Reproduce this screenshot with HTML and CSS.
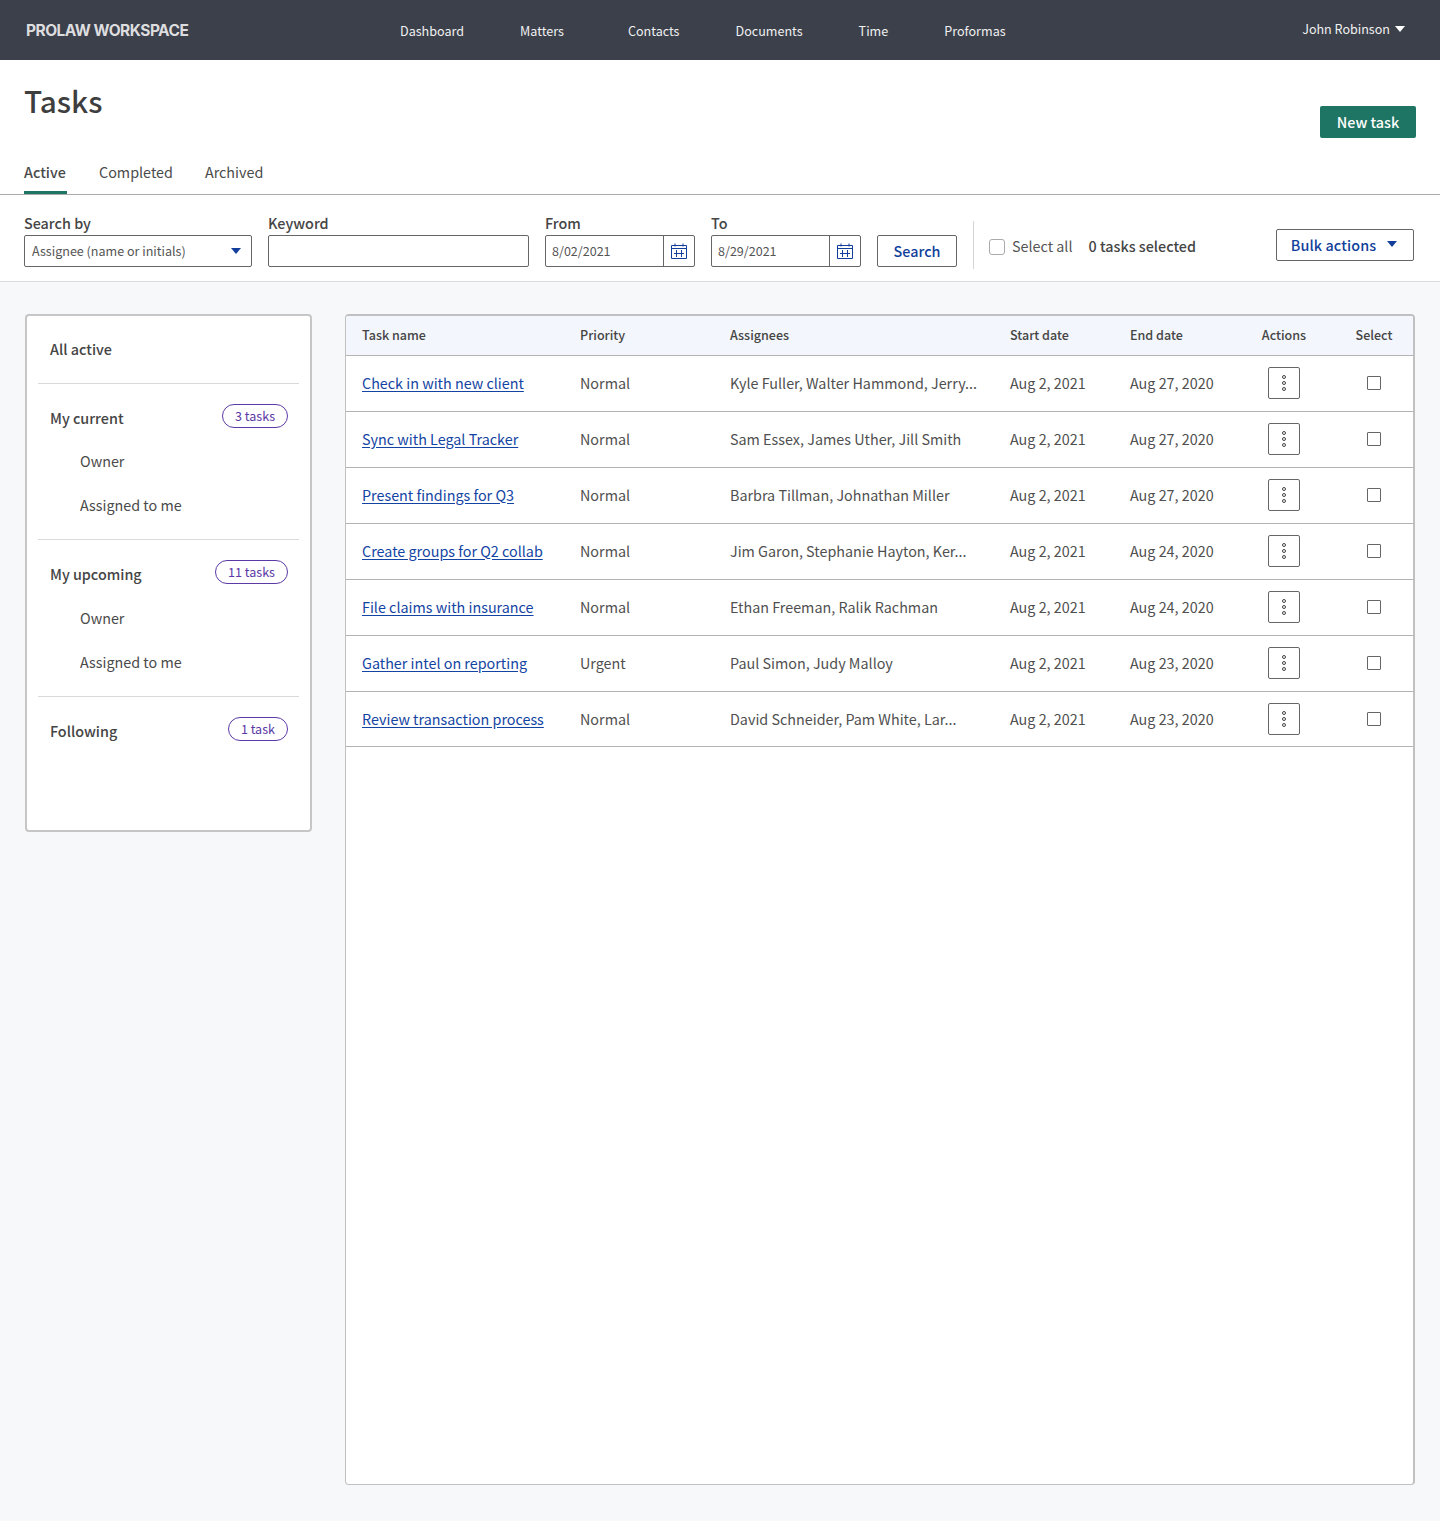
FILE: index.html
```html
<!DOCTYPE html>
<html lang="en">
<head>
<meta charset="utf-8">
<title>Tasks</title>
<link rel="stylesheet" href="styles.css">
</head>
<body>
<header class="topbar">
  <div class="logo">PROLAW WORKSPACE</div>
  <nav class="mainnav">
    <a>Dashboard</a><a class="wide">Matters</a><a>Contacts</a><a>Documents</a><a>Time</a><a>Proformas</a>
  </nav>
  <div class="user">John Robinson <span class="caret caret-white"></span></div>
</header>

<section class="titlebar">
  <div class="titlerow">
    <h1>Tasks</h1>
    <button class="btn-new">New task</button>
  </div>
  <div class="tabs">
    <a class="tab active">Active</a><a class="tab">Completed</a><a class="tab">Archived</a>
  </div>
</section>

<section class="filters">
  <div class="field f-search">
    <label>Search by</label>
    <div class="box select"><span>Assignee (name or initials)</span><span class="caret caret-blue"></span></div>
  </div>
  <div class="field f-keyword">
    <label>Keyword</label>
    <div class="box"></div>
  </div>
  <div class="field f-date">
    <label>From</label>
    <div class="box date"><span class="dateval">8/02/2021</span><span class="calbtn"><svg width="16" height="16" viewBox="0 0 16 16" fill="none" stroke="#123f9b" stroke-width="1"><path d="M.5 2.5h15v13H.5zM.5 5.5h15M4 .5v3M12 .5v3M5.5 7v7M10.5 7v7M3 10.5h10"/></svg></span></div>
  </div>
  <div class="field f-date">
    <label>To</label>
    <div class="box date"><span class="dateval">8/29/2021</span><span class="calbtn"><svg width="16" height="16" viewBox="0 0 16 16" fill="none" stroke="#123f9b" stroke-width="1"><path d="M.5 2.5h15v13H.5zM.5 5.5h15M4 .5v3M12 .5v3M5.5 7v7M10.5 7v7M3 10.5h10"/></svg></span></div>
  </div>
  <button class="btn-search">Search</button>
  <div class="vrule"></div>
  <label class="selectall"><input type="checkbox" class="check check-soft"><span>Select all</span></label>
  <div class="selected">0 tasks selected</div>
  <button class="btn-bulk">Bulk actions <span class="caret caret-blue"></span></button>
</section>

<main class="content">
  <aside class="side">
    <div class="sec sec-all"><div class="sec-title">All active</div></div>
    <div class="sec sec-current">
      <div class="sec-head"><div class="sec-title">My current</div><span class="pill">3 tasks</span></div>
      <div class="sub">Owner</div>
      <div class="sub">Assigned to me</div>
    </div>
    <div class="sec sec-upcoming">
      <div class="sec-head"><div class="sec-title">My upcoming</div><span class="pill">11 tasks</span></div>
      <div class="sub">Owner</div>
      <div class="sub">Assigned to me</div>
    </div>
    <div class="sec sec-last">
      <div class="sec-head"><div class="sec-title">Following</div><span class="pill">1 task</span></div>
    </div>
  </aside>

  <div class="panel">
    <table class="tasks">
      <colgroup><col class="c1"><col class="c2"><col class="c3"><col class="c4"><col class="c5"><col class="c6"><col class="c7"></colgroup>
      <thead>
        <tr><th>Task name</th><th>Priority</th><th>Assignees</th><th>Start date</th><th>End date</th><th class="ctr">Actions</th><th class="ctr">Select</th></tr>
      </thead>
      <tbody>
        <tr><td><a href="#">Check in with new client</a></td><td>Normal</td><td>Kyle Fuller, Walter Hammond, Jerry...</td><td>Aug 2, 2021</td><td>Aug 27, 2020</td><td class="ctr"><button class="kebab"><i></i><i></i><i></i></button></td><td class="ctr"><input type="checkbox" class="check"></td></tr>
        <tr><td><a href="#">Sync with Legal Tracker</a></td><td>Normal</td><td>Sam Essex, James Uther, Jill Smith</td><td>Aug 2, 2021</td><td>Aug 27, 2020</td><td class="ctr"><button class="kebab"><i></i><i></i><i></i></button></td><td class="ctr"><input type="checkbox" class="check"></td></tr>
        <tr><td><a href="#">Present findings for Q3</a></td><td>Normal</td><td>Barbra Tillman, Johnathan Miller</td><td>Aug 2, 2021</td><td>Aug 27, 2020</td><td class="ctr"><button class="kebab"><i></i><i></i><i></i></button></td><td class="ctr"><input type="checkbox" class="check"></td></tr>
        <tr><td><a href="#">Create groups for Q2 collab</a></td><td>Normal</td><td>Jim Garon, Stephanie Hayton, Ker...</td><td>Aug 2, 2021</td><td>Aug 24, 2020</td><td class="ctr"><button class="kebab"><i></i><i></i><i></i></button></td><td class="ctr"><input type="checkbox" class="check"></td></tr>
        <tr><td><a href="#">File claims with insurance</a></td><td>Normal</td><td>Ethan Freeman, Ralik Rachman</td><td>Aug 2, 2021</td><td>Aug 24, 2020</td><td class="ctr"><button class="kebab"><i></i><i></i><i></i></button></td><td class="ctr"><input type="checkbox" class="check"></td></tr>
        <tr><td><a href="#">Gather intel on reporting</a></td><td>Urgent</td><td>Paul Simon, Judy Malloy</td><td>Aug 2, 2021</td><td>Aug 23, 2020</td><td class="ctr"><button class="kebab"><i></i><i></i><i></i></button></td><td class="ctr"><input type="checkbox" class="check"></td></tr>
        <tr><td><a href="#">Review transaction process</a></td><td>Normal</td><td>David Schneider, Pam White, Lar...</td><td>Aug 2, 2021</td><td>Aug 23, 2020</td><td class="ctr"><button class="kebab"><i></i><i></i><i></i></button></td><td class="ctr"><input type="checkbox" class="check"></td></tr>
      </tbody>
    </table>
  </div>
</main>
</body>
</html>
```
FILE: styles.css
```css
* { box-sizing: border-box; }
html, body { margin: 0; padding: 0; }
body {
  font-family: "Noto Sans CJK SC", "Noto Sans", sans-serif;
  font-size: 14.35px;
  line-height: 22px;
  color: #454545;
  background: #f7f8fa;
  height: 1521px;
  overflow: hidden;
}
button { font-family: inherit; cursor: pointer; }

.topbar {
  height: 60px;
  background: #3c404b;
  display: flex;
  align-items: center;
  padding: 0 35px 0 26px;
  color: #f0f0f0;
  font-size: 12.55px;
}
.logo {
  width: 374px;
  padding-top: 2px;
  font-family: Inter, "Liberation Sans", sans-serif;
  font-weight: 700;
  font-size: 15.5px;
  letter-spacing: -0.52px;
  color: #dddddf;
}
.mainnav { display: flex; gap: 56px; flex: 1; padding-top: 1px; font-size: 12.58px; }
.mainnav .wide { margin-right: 8px; }
.user { display: flex; align-items: center; gap: 5px; margin-bottom: 3px; }

.caret { display: inline-block; width: 0; height: 0; border-left: 5.5px solid transparent; border-right: 5.5px solid transparent; border-top: 6px solid; }
.caret-white { color: #fff; }
.caret-blue { color: #123f9b; }

.titlebar { background: #fff; height: 135px; border-bottom: 1px solid #aaa; padding: 0 24px; display: flex; flex-direction: column; }
.titlerow { display: flex; justify-content: space-between; height: 78px; }
h1 { margin: 22px 0 0; font-size: 29.7px; line-height: 38px; font-weight: 500; color: #3e3e3e; }
.btn-new {
  margin-top: 46px; width: 96px; height: 32px; border: 0; border-radius: 2px;
  background: #1f7563; color: #fff; font-size: 14.35px; font-weight: 500; padding: 0 0 2px;
}
.tabs { display: flex; gap: 32px; height: 57px; align-items: stretch; }
.tab { padding-top: 23px; height: 56px; color: #4a4a4a; }
.tab.active { font-weight: 500; border-bottom: 3px solid #1f7563; min-width: 43px; }

.filters {
  background: #fff; height: 87px; border-bottom: 1px solid #d9dbe0;
  padding: 0 26px 0 24px; display: flex; align-items: flex-start;
}
.field { display: flex; flex-direction: column; margin-top: 18px; margin-right: 16px; }
.field label { font-weight: 500; line-height: 20px; height: 22px; color: #454545; }
.f-search { width: 228px; }
.f-keyword { width: 261px; }
.f-date { width: 150px; }
.box { height: 32px; border: 1px solid #666; border-radius: 2px; background: #fff; }
.select { display: flex; align-items: center; justify-content: space-between; padding: 0 10px 0 7px; font-size: 12.55px; color: #555; }
.date { display: flex; font-size: 12.55px; color: #555; }
.dateval { flex: 1; padding: 4px 0 0 6px; }
.calbtn { width: 31px; border-left: 1px solid #666; display: flex; align-items: center; justify-content: center; }
.btn-search {
  margin-top: 40px; width: 80px; height: 32px; background: #fff; border: 1px solid #666; border-radius: 2px;
  color: #123f9b; font-weight: 500; font-size: 14.35px; padding: 0 0 2px;
}
.vrule { width: 1px; height: 48px; background: #d4d4d4; margin: 26px 15px 0 16px; }
.selectall { display: flex; align-items: center; gap: 7px; margin-top: 40px; color: #555; }
.selectall .check-soft { margin-top: 2px; }
.selected { margin: 40px 0 0 16px; font-weight: 500; color: #454545; }
.btn-bulk {
  margin: 34px 0 0 auto; width: 138px; height: 32px; background: #fff; border: 1px solid #666; border-radius: 2px;
  color: #123f9b; font-weight: 500; font-size: 14.35px; letter-spacing: .1px; padding: 0 2px 2px 0; display: flex; align-items: center; justify-content: center; gap: 11px;
}

.check { appearance: none; -webkit-appearance: none; margin: 0; width: 14px; height: 14px; border: 1px solid #666; border-radius: 1px; background: #fff; display: block; }
.check-soft { width: 16px; height: 16px; border-color: #aaa; border-radius: 3px; }

.content { display: flex; align-items: flex-start; padding: 32px 25px 0; gap: 33px; }
.side {
  width: 287px; height: 518px; background: #fff; border: 2px solid #c6c6c6; border-radius: 4px;
  padding: 0 11px; flex: none;
}
.sec { border-bottom: 1px solid #d9d9d9; padding: 0 11px 0 12px; }
.sec-all { height: 68px; padding-top: 22px; }
.sec-current { height: 156px; padding-top: 23px; }
.sec-current .sec-head { margin-bottom: -1px; }
.sec-upcoming { height: 157px; padding-top: 23px; }
.sec-last { border-bottom: 0; padding-top: 23px; }
.sec-title { font-weight: 500; color: #454545; }
.sec-head { display: flex; justify-content: space-between; align-items: flex-start; }
.pill {
  height: 24px; margin-top: -3px; padding: 0 12px; border: 1px solid #5b3aa5; border-radius: 12px;
  color: #5b3aa5; font-size: 12.55px; line-height: 22px;
}
.sub { margin: 21px 0 0 30px; line-height: 23px; color: #4a4a4a; }

.panel {
  width: 1070px; height: 1171px; background: #fff; border: 1px solid #c0c0c0; border-top: 2px solid #c0c0c0; border-right-width: 2px; border-radius: 4px; overflow: hidden; flex: none;
}
.tasks { width: 1068px; border-collapse: separate; border-spacing: 0; table-layout: fixed; }
.c1 { width: 218px; } .c2 { width: 150px; } .c3 { width: 280px; } .c4, .c5 { width: 120px; } .c6 { width: 100px; } .c7 { width: 80px; }
.tasks th {
  height: 40px; background: #f3f6fc; border-bottom: 1px solid #b3b3b3; text-align: left; padding: 0 0 2px 16px;
  font-size: 12.55px; font-weight: 500; color: #454545;
}
.tasks td { height: 56px; border-bottom: 1px solid #b3b3b3; padding: 0 0 2px 16px; color: #4f4f4f; white-space: nowrap; overflow: hidden; }
.tasks tbody tr:last-child td { height: 55px; padding-bottom: 0; }
.tasks th.ctr { padding: 0 0 2px; text-align: center; }
.tasks td.ctr { padding: 0; text-align: center; }
.tasks tbody tr:last-child td.ctr { padding-top: 1px; }
.tasks a { color: #1344a3; text-decoration: underline; text-underline-offset: 2px; }
.tasks .check { margin: 0 auto 2px; }
.kebab {
  width: 32px; height: 32px; background: #fff; border: 1px solid #666; border-radius: 2px; padding: 0; margin-bottom: 2px;
  display: inline-flex; flex-direction: column; align-items: center; justify-content: center; gap: 2px; vertical-align: middle;
}
.kebab i { display: block; width: 4px; height: 4px; border: 1px solid #444; border-radius: 50%; }
```
